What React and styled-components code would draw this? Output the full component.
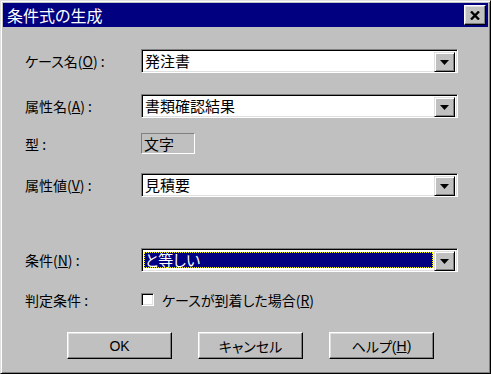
import React from 'react';
import styled, { createGlobalStyle } from 'styled-components';

const GlobalStyle = createGlobalStyle`
  html, body {
    margin: 0;
    padding: 0;
    background: #c0c0c0;
  }
  body {
    font-family: "Noto Sans CJK JP", "Noto Sans", sans-serif;
    font-feature-settings: "palt";
  }
`;

const Window = styled.div`
  width: 491px;
  height: 374px;
  box-sizing: border-box;
  border: 1px solid;
  border-color: #dfdfdf #000 #000 #dfdfdf;
  box-shadow: inset 1px 1px #fff, inset -1px -1px #808080;
  padding: 2px;
  background: #c0c0c0;
  display: flex;
  flex-direction: column;
`;

const TitleBar = styled.div`
  height: 24px;
  background: #000080;
  display: flex;
  align-items: center;
  justify-content: space-between;
  padding: 0 2px 0 4px;
`;

const TitleText = styled.span`
  color: #fff;
  font-size: 16px;
  line-height: 24px;
`;

const CloseButton = styled.div`
  width: 22px;
  height: 20px;
  box-sizing: border-box;
  background: #c0c0c0;
  border: 1px solid;
  border-color: #fff #000 #000 #fff;
  box-shadow: inset -1px -1px #808080, inset 1px 1px #dfdfdf;
  display: flex;
  align-items: center;
  justify-content: center;
`;

const Body = styled.div`
  flex: 1;
  padding: 22px 0 0 22px;
  display: flex;
  flex-direction: column;
`;

const Row = styled.div`
  display: flex;
  align-items: center;
  height: ${p => p.$h}px;
  margin-top: ${p => p.$top || 0}px;
`;

const Label = styled.div`
  width: 116px;
  font-size: 14px;
  color: #000;
  white-space: nowrap;
`;

const Key = styled.span`
  text-decoration: underline;
`;

const Combo = styled.div`
  width: 317px;
  height: 24px;
  box-sizing: border-box;
  border: 1px solid;
  border-color: #808080 #fff #fff #808080;
  box-shadow: inset 1px 1px #000, inset -1px -1px #dfdfdf;
  background: #fff;
  padding: 2px;
  display: flex;
`;

const ComboText = styled.div`
  flex: 1;
  font-size: 15px;
  line-height: 16px;
  padding: 0 0 2px 1px;
  margin: 1px 1px 1px 0;
  color: ${p => (p.$selected ? '#fff' : '#000')};
  background: ${p => (p.$selected ? '#000080' : 'transparent')};
  outline: ${p => (p.$selected ? '1px dotted #ffff00' : 'none')};
  outline-offset: -1px;
  white-space: nowrap;
`;

const DropButton = styled.div`
  width: 21px;
  height: 20px;
  box-sizing: border-box;
  background: #c0c0c0;
  border: 1px solid;
  border-color: #dfdfdf #000 #000 #dfdfdf;
  box-shadow: inset 1px 1px #fff, inset -1px -1px #808080;
  display: flex;
  align-items: center;
  justify-content: center;
`;

const StaticBox = styled.div`
  width: 54px;
  height: 21px;
  box-sizing: border-box;
  border: 1px solid;
  border-color: #808080 #fff #fff #808080;
  font-size: 15px;
  line-height: 19px;
  padding-left: 2px;
`;

const CheckBox = styled.div`
  width: 13px;
  height: 13px;
  box-sizing: border-box;
  border: 1px solid;
  border-color: #808080 #fff #fff #808080;
  box-shadow: inset 1px 1px #000, inset -1px -1px #dfdfdf;
  background: #fff;
  margin-right: 8px;
`;

const CheckText = styled.span`
  font-size: 14px;
  white-space: nowrap;
`;

const ButtonRow = styled.div`
  display: grid;
  grid-template-columns: repeat(3, 105px);
  column-gap: 26px;
  margin: 26px 0 0 42px;
`;

const Button = styled.div`
  height: 27px;
  box-sizing: border-box;
  background: #c0c0c0;
  border: 1px solid;
  border-color: #fff #000 #000 #fff;
  box-shadow: inset -1px -1px #808080, inset 1px 1px #dfdfdf;
  display: flex;
  align-items: center;
  justify-content: center;
  font-size: 14px;
  font-family: "Liberation Sans", "Noto Sans CJK JP", sans-serif;
`;

const Arrow = () => (
  <svg width="9" height="5" viewBox="0 0 9 5">
    <polygon points="0,0 9,0 4.5,5" fill="#000" />
  </svg>
);

const CloseIcon = () => (
  <svg width="10" height="9" viewBox="0 0 10 9">
    <path d="M1 0.5 L9 8.5 M9 0.5 L1 8.5" stroke="#000" strokeWidth="2.4" />
  </svg>
);

const ComboBox = ({ value, selected }) => (
  <Combo>
    <ComboText $selected={selected}>{value}</ComboText>
    <DropButton>
      <Arrow />
    </DropButton>
  </Combo>
);

export default function App() {
  return (
    <>
      <GlobalStyle />
      <Window>
        <TitleBar>
          <TitleText>条件式の生成</TitleText>
          <CloseButton>
            <CloseIcon />
          </CloseButton>
        </TitleBar>
        <Body>
          <Row $h={24}>
            <Label>ケース名(<Key>O</Key>) :</Label>
            <ComboBox value="発注書" />
          </Row>
          <Row $h={24} $top={21}>
            <Label>属性名(<Key>A</Key>) :</Label>
            <ComboBox value="書類確認結果" />
          </Row>
          <Row $h={21} $top={15}>
            <Label>型 :</Label>
            <StaticBox>文字</StaticBox>
          </Row>
          <Row $h={24} $top={19}>
            <Label>属性値(<Key>V</Key>) :</Label>
            <ComboBox value="見積要" />
          </Row>
          <Row $h={24} $top={51}>
            <Label>条件(<Key>N</Key>) :</Label>
            <ComboBox value="と等しい" selected />
          </Row>
          <Row $h={13} $top={21}>
            <Label>判定条件 :</Label>
            <CheckBox />
            <CheckText>ケースが到着した場合(<Key>R</Key>)</CheckText>
          </Row>
          <ButtonRow>
            <Button>OK</Button>
            <Button>キャンセル</Button>
            <Button>ヘルプ(<Key>H</Key>)</Button>
          </ButtonRow>
        </Body>
      </Window>
    </>
  );
}
